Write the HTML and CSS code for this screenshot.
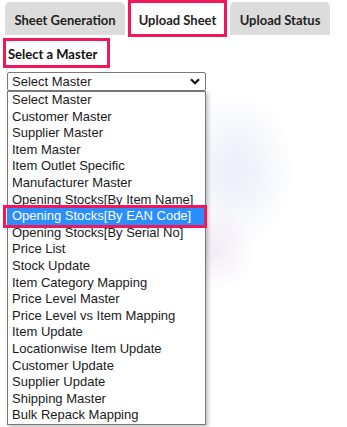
FILE: index.html
```html
<!DOCTYPE html>
<html lang="en">
<head>
    <meta charset="UTF-8">
    <meta name="viewport" content="width=device-width, initial-scale=1.0">
    <title>Upload Sheet</title>
    <link rel="stylesheet" href="styles.css">
</head>
<body>
    <div class="tabs">
        <div class="tab tab-wide">Sheet Generation</div>
        <div class="tab active">Upload Sheet</div>
        <div class="tab">Upload Status</div>
    </div>

    <div class="panel">
        <div class="label">Select a Master</div>

        <div class="select">
            <span>Select Master</span>
            <svg class="chevron" width="10" height="7" viewBox="0 0 10 7">
                <path d="M1 1.2 L5 5.2 L9 1.2" fill="none" stroke="#111" stroke-width="2.2"/>
            </svg>
        </div>

        <!-- open dropdown list -->
        <ul class="options">
            <li>Select Master</li>
            <li>Customer Master</li>
            <li>Supplier Master</li>
            <li>Item Master</li>
            <li>Item Outlet Specific</li>
            <li>Manufacturer Master</li>
            <li>Opening Stocks[By Item Name]</li>
            <li class="selected">Opening Stocks[By EAN Code]</li>
            <li>Opening Stocks[By Serial No]</li>
            <li>Price List</li>
            <li>Stock Update</li>
            <li>Item Category Mapping</li>
            <li>Price Level Master</li>
            <li>Price Level vs Item Mapping</li>
            <li>Item Update</li>
            <li>Locationwise Item Update</li>
            <li>Customer Update</li>
            <li>Supplier Update</li>
            <li>Shipping Master</li>
            <li>Bulk Repack Mapping</li>
        </ul>
    </div>
</body>
</html>
```

FILE: styles.css
```css
:root {
    --pink: #f2175b;
    --tab-bg: #dcdcdc;
    --text-color: #1a1a1a;
    --option-blue: #2b8eff;
    --border-color: #7a7a7a;
}

body {
    margin: 0;
    font-family: Lato, "Open Sans", sans-serif;
    color: var(--text-color);
    background:
        radial-gradient(ellipse 60px 80px at 235px 170px, rgba(200, 205, 235, 0.35), transparent),
        radial-gradient(ellipse 40px 40px at 215px 250px, rgba(220, 200, 230, 0.35), transparent),
        #fff;
    height: 427px;
    overflow: hidden;
}

.tabs {
    display: flex;
    align-items: flex-start;
    gap: 3px;
    padding: 2px 0 0 5px;
}
.tab {
    width: 100px;
    height: 33px;
    line-height: 36px;
    box-sizing: border-box;
    text-align: center;
    white-space: nowrap;
    background: var(--tab-bg);
    border-radius: 5px 5px 0 0;
    font-size: 13px;
    font-weight: 700;
    color: #222;
}
.tab-wide {
    width: 120px;
}
.tab.active {
    margin-top: -2px;
    height: 37px;
    width: 99px;
    line-height: 34px;
    background: #fff;
    border: 3px solid var(--pink);
    border-radius: 0;
}

.panel {
    padding: 0 0 0 3px;
}
.label {
    display: inline-block;
    margin-top: 1px;
    height: 24px;
    line-height: 26px;
    padding: 0 10px 0 2px;
    border: 3px solid var(--pink);
    font-size: 13px;
    font-weight: 700;
    color: #111;
}

.select {
    display: flex;
    justify-content: space-between;
    align-items: center;
    margin: 4px 0 0 4px;
    width: 199px;
    height: 19px;
    box-sizing: border-box;
    padding: 0 5px 0 4px;
    border: 1px solid var(--border-color);
    border-radius: 2px;
    font-family: "Liberation Sans", Arial, sans-serif;
    font-size: 13px;
}

.options {
    list-style: none;
    margin: 0 0 0 4px;
    padding: 0;
    width: 199px;
    box-sizing: border-box;
    border: 1px solid var(--border-color);
    background: #fff;
    box-shadow: 2px 2px 4px rgba(0, 0, 0, 0.25);
    font-family: "Liberation Sans", Arial, sans-serif;
    font-size: 13px;
}
.options li {
    height: 16.6px;
    line-height: 16.6px;
    padding-left: 4px;
    white-space: nowrap;
}
.options li.selected {
    position: relative;
    background: var(--option-blue);
    color: #fff;
}
.options li.selected::after {
    content: "";
    position: absolute;
    top: -3px;
    bottom: -3px;
    left: -5px;
    right: -2px;
    border: 3px solid var(--pink);
}
```
